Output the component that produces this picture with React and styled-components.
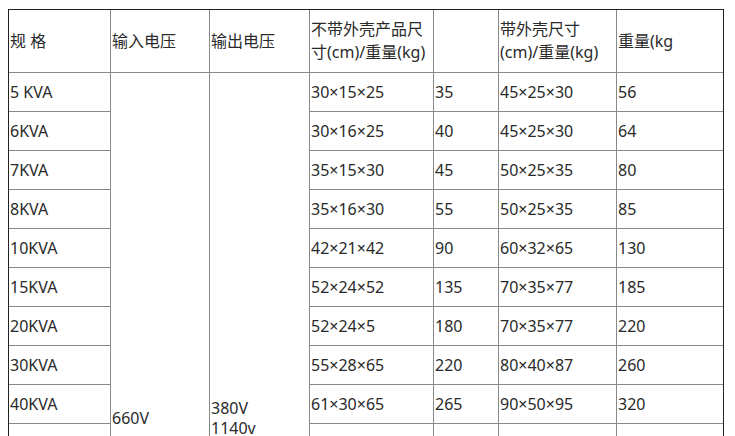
import React from 'react';
import styled, { createGlobalStyle } from 'styled-components';

const GlobalStyle = createGlobalStyle`
  html, body {
    margin: 0;
    padding: 0;
    background: #fff;
  }
  body {
    padding: 9px 0 0 8px;
    font-family: "Noto Sans", "Noto Sans CJK SC", sans-serif;
    color: #2a2a2a;
  }
`;

const specs = [
  ['5 KVA', '30×15×25', '35', '45×25×30', '56'],
  ['6KVA', '30×16×25', '40', '45×25×30', '64'],
  ['7KVA', '35×15×30', '45', '50×25×35', '80'],
  ['8KVA', '35×16×30', '55', '50×25×35', '85'],
  ['10KVA', '42×21×42', '90', '60×32×65', '130'],
  ['15KVA', '52×24×52', '135', '70×35×77', '185'],
  ['20KVA', '52×24×5', '180', '70×35×77', '220'],
  ['30KVA', '55×28×65', '220', '80×40×87', '260'],
  ['40KVA', '61×30×65', '265', '90×50×95', '320'],
  ...Array.from({ length: 9 }, () => ['', '', '', '', '']),
];

const colWidths = [102, 99, 100, 124, 65, 118, 106];

const Table = styled.table`
  width: 716px;
  table-layout: fixed;
  border-collapse: separate;
  border-spacing: 0;
  border: 1px solid #222;
  font-size: 16px;
`;

const Cell = styled.td`
  box-sizing: border-box;
  height: ${(p) => (p.$head ? 63 : 39)}px;
  padding: 0 0 0 1px;
  border-right: ${(p) => (p.$last ? 'none' : '1px solid #888')};
  border-bottom: 1px solid #888;
  vertical-align: middle;
  text-align: left;
  line-height: ${(p) => (p.$head ? 23 : 20)}px;
  font-weight: normal;
  white-space: nowrap;
  overflow: hidden;
`;

const SpanCell = styled(Cell)`
  padding-bottom: ${(p) => p.$shift}px;
`;

export default function App() {
  return (
    <>
      <GlobalStyle />
      <Table>
        <colgroup>
          {colWidths.map((w, i) => (
            <col key={i} style={{ width: w }} />
          ))}
        </colgroup>
        <thead>
          <tr>
            <Cell as="th" $head>规 格</Cell>
            <Cell as="th" $head>输入电压</Cell>
            <Cell as="th" $head>输出电压</Cell>
            <Cell as="th" $head>不带外壳产品尺<br />寸(cm)/重量(kg)</Cell>
            <Cell as="th" $head></Cell>
            <Cell as="th" $head>带外壳尺寸<br />(cm)/重量(kg)</Cell>
            <Cell as="th" $head $last>重量(kg</Cell>
          </tr>
        </thead>
        <tbody>
          {specs.map((row, i) => (
            <tr key={i}>
              <Cell>{row[0]}</Cell>
              {i === 0 && (
                <>
                  <SpanCell rowSpan={specs.length} $shift={12}>660V</SpanCell>
                  <SpanCell rowSpan={specs.length} $shift={12}>380V<br />1140v</SpanCell>
                </>
              )}
              <Cell>{row[1]}</Cell>
              <Cell>{row[2]}</Cell>
              <Cell>{row[3]}</Cell>
              <Cell $last>{row[4]}</Cell>
            </tr>
          ))}
        </tbody>
      </Table>
    </>
  );
}
